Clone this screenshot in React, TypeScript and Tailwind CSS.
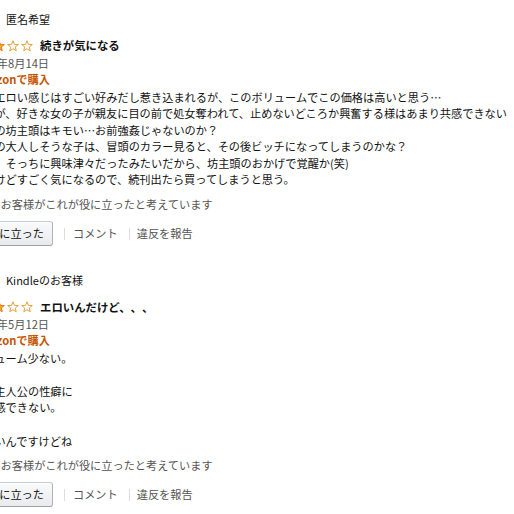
const font = { fontFamily: '"Noto Sans CJK JP", "Noto Sans", sans-serif' };

const StarShape = ({ filled, x }: { filled: boolean; x: number }) => (
  <polygon
    transform={`translate(${x} 0)`}
    points="6,0.7 7.41,4.36 11.33,4.57 8.28,7.04 9.29,10.83 6,8.7 2.71,10.83 3.72,7.04 0.67,4.57 4.59,4.36"
    fill={filled ? "#ffa41c" : "#ffffff"}
    stroke={filled ? "#de7921" : "#e3a33d"}
    strokeWidth="1"
    strokeLinejoin="round"
  />
);

const Stars = ({ rating }: { rating: number }) => (
  <svg width="68" height="12" viewBox="0 0 68 12" className="-ml-[7px] shrink-0">
    {[0, 1, 2, 3, 4].map((i) => (
      <StarShape key={i} filled={i < rating} x={i * 14} />
    ))}
  </svg>
);

interface ReviewProps {
  name: string;
  rating: number;
  title: string;
  date: string;
  lines: string[];
  helpful: string;
}

const Review = ({ name, rating, title, date, lines, helpful }: ReviewProps) => {
  return (
    <div className="flex flex-col">
      <div className="flex h-[24px] items-center">
        <div className="h-[24px] w-[24px] shrink-0 rounded-full bg-[#d5d9d9]"></div>
        <span className="ml-[10px] text-[11px] text-[#111]">{name}</span>
      </div>

      <div className="mt-[6px] flex h-[18px] items-center">
        <Stars rating={rating} />
        <span className="ml-[7px] text-[11.4px] font-bold text-[#111]">{title}</span>
      </div>

      <div className="flex h-[16px] items-center text-[11.2px] text-[#555]">{date}</div>
      <div className="flex h-[16px] items-center text-[11.2px] font-bold text-[#c45500]">Amazonで購入</div>

      <div className="mt-[1.5px] text-[11.2px] leading-[16.6px] text-[#111]">
        {lines.map((line, i) => (
          <div key={i} className="h-[16.6px] whitespace-nowrap">
            {line}
          </div>
        ))}
      </div>

      <div className="mt-[8px] flex h-[16px] items-center text-[11.2px] text-[#555]">{helpful}</div>

      <div className="mt-[9px] flex h-[25px] items-center text-[11.2px]">
        <button className="ml-[7px] flex h-[25px] items-center rounded-[3px] border border-[#adb1b8] border-t-[#c7cacf] border-b-[#9c9fa5] bg-gradient-to-b from-[#f9fafb] to-[#e8eaed] px-[8px] text-[#111] shadow-[inset_0_1px_0_rgba(255,255,255,0.7)]">
          役に立った
        </button>
        <span className="ml-[11px] h-[12px] w-px bg-[#dddddd]"></span>
        <span className="ml-[8px] text-[#555]">コメント</span>
        <span className="ml-[11px] h-[12px] w-px bg-[#dddddd]"></span>
        <span className="ml-[7px] text-[#555]">違反を報告</span>
      </div>
    </div>
  );
};

export default function App() {
  return (
    <div className="h-[514px] w-[514px] overflow-hidden bg-white [text-spacing-trim:space-all]" style={font}>
      <div className="-ml-[28px] flex w-[600px] flex-col pt-[7px]">
        <Review
          name="匿名希望"
          rating={3}
          title="続きが気になる"
          date="2014年8月14日"
          lines={[
            "絵はエロい感じはすごい好みだし惹き込まれるが、このボリュームでこの価格は高いと思う…",
            "話だが、好きな女の子が親友に目の前で処女奪われて、止めないどころか興奮する様はあまり共感できない",
            "親友の坊主頭はキモい…お前強姦じゃないのか？",
            "黒髪の大人しそうな子は、冒頭のカラー見ると、その後ビッチになってしまうのかな？",
            "元々、そっちに興味津々だったみたいだから、坊主頭のおかげで覚醒か(笑)",
            "んだけどすごく気になるので、続刊出たら買ってしまうと思う。",
          ]}
          helpful="3人のお客様がこれが役に立ったと考えています"
        />
        <div className="mt-[22px]">
          <Review
            name="Kindleのお客様"
            rating={3}
            title="エロいんだけど、、、"
            date="2014年5月12日"
            lines={[
              "ボリューム少ない。",
              "\u00a0",
              "あと主人公の性癖に",
              "は共感できない。",
              "\u00a0",
              "エロいんですけどね",
            ]}
            helpful="2人のお客様がこれが役に立ったと考えています"
          />
        </div>
      </div>
    </div>
  );
}
